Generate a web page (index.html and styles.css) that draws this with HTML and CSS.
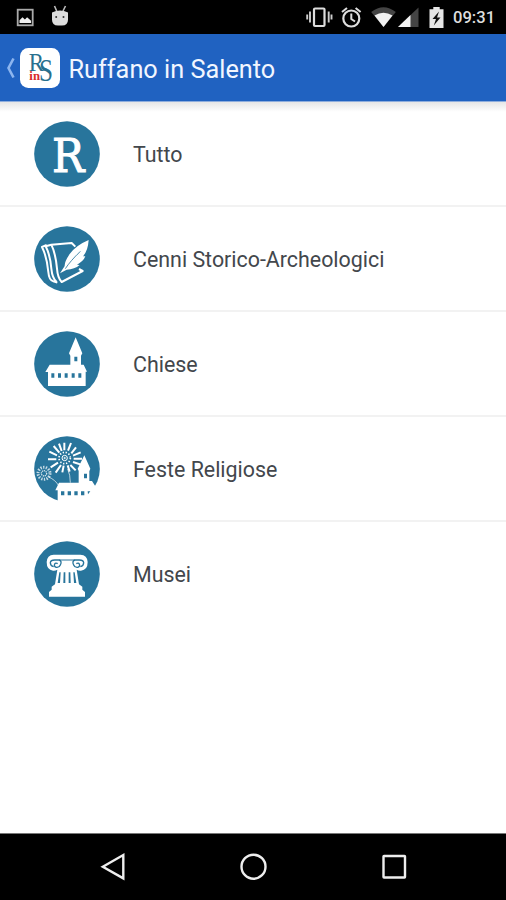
FILE: index.html
```html
<!DOCTYPE html>
<html lang="it">
<head>
<meta charset="utf-8">
<title>Ruffano in Salento</title>
<link rel="stylesheet" href="styles.css">
</head>
<body>
<div class="screen">
  <div class="status">
    <svg class="status-left" viewBox="0 0 80 34">
      <rect x="17.700" y="9.700" width="15" height="15.600" fill="none" stroke="#aaa" stroke-width="1.800"/>
      <path d="M19.500 23v-2.700l3-3 2.400 2.200 2.200-2.200 4 3.400V23z" fill="#eee"/>
      <path d="M54.500 6l2.200 5M65.500 6l-2.500 5" stroke="#bbb" stroke-width="1.600"/>
      <path d="M52 12.500q8-4 16 0v7q0 6-6 6h-4q-6 0-6-6z" fill="#ddd"/>
      <circle cx="56.200" cy="17" r="1" fill="#333"/><circle cx="63.500" cy="17" r="1" fill="#333"/>
    </svg>
    <svg class="status-right" viewBox="300 0 146 34">
      <rect x="314" y="8.500" width="10.500" height="17.500" rx="1" fill="none" stroke="#ddd" stroke-width="2.200"/>
      <path d="M310 11.500v11M307.200 14.500v5M328.700 11.500v11M331.500 14.500v5" stroke="#ccc" stroke-width="1.900"/>
      <circle cx="351.300" cy="18.500" r="8" fill="none" stroke="#ddd" stroke-width="2.200"/>
      <path d="M351.300 13.500v5.500l3.700 2.500M342 12l5-4M360.600 12l-5-4" fill="none" stroke="#ddd" stroke-width="2"/>
      <path d="M371.200 12q12.300-9.500 24.600 0L383.500 27z" fill="#444"/>
      <path d="M374.500 15.500q9-5.500 18 0L383.500 27z" fill="#f2f2f2"/>
      <path d="M418.500 7.500V27H398z" fill="#444"/>
      <path d="M410.500 15v12H398z" fill="#f2f2f2"/>
      <path d="M429.500 9.300h3.800V7h6.400v2.300h3.800V28h-14z" fill="#e6e6e6"/>
      <path d="M439 11.500l-6.500 7.500h3.500l-2.200 6.500 6.700-8H437z" fill="#111"/>
    </svg>
    <span class="clock">09:31</span>
  </div>
  <header class="appbar">
    <svg class="back" viewBox="0 0 9 22"><path d="M7.500 1.500L2.500 11L7.500 20.500" fill="none" stroke="#8cb5ef" stroke-width="2.600"/></svg>
    <svg class="logo" viewBox="0 0 120 120">
      <rect width="120" height="120" rx="25" fill="#fff"/>
      <text class="logo-letter" x="26" y="69" font-size="76" textLength="46" lengthAdjust="spacingAndGlyphs">R</text>
      <text class="logo-letter" x="57" y="98" font-size="92" textLength="42" lengthAdjust="spacingAndGlyphs">S</text>
      <text class="logo-in" x="28" y="95" font-size="36" textLength="32" lengthAdjust="spacingAndGlyphs">in</text>
    </svg>
    <h1 class="title">Ruffano in Salento</h1>
  </header>
  <ul class="list">
    <li class="row">
      <svg class="icon" viewBox="23 26 198 198">
        <circle class="disc" cx="122" cy="125" r="98.500"/>
        <text class="letter" x="77" y="179" font-size="141" textLength="97" lengthAdjust="spacingAndGlyphs">R</text>
      </svg>
      <span class="label">Tutto</span>
    </li>
    <li class="row">
      <svg class="icon" viewBox="23 22 198 198">
        <circle class="disc" cx="122" cy="121" r="98.500"/>
        <g fill="none" stroke="#fff" stroke-width="6" stroke-linejoin="round">
          <path d="M61 79L47 85Q62 115 66 160Q68 185 81 188L93 192"/>
          <path d="M75 78L58 83Q72 110 75 150Q78 180 91 190"/>
          <path d="M147 84L136 73L75 78Q88 105 92 150Q94 178 106 190L169 157L158 151"/>
        </g>
        <path d="M187 64Q149 80 130 106Q114 130 115 142L101 164L121 153Q145 152 160 139L152 138Q172 127 177 113L170 113Q185 96 187 64z" fill="#fff"/>
        <path d="M117 150Q132 127 162 98" fill="none" stroke="#28759c" stroke-width="2.500"/>
      </svg>
      <span class="label">Cenni Storico-Archeologici</span>
    </li>
    <li class="row">
      <svg class="icon" viewBox="23 20 198 198">
        <circle class="disc" cx="122" cy="119" r="98.500"/>
        <path d="M148 39L168 87L164 94V121H172L182 142H178V185H65V143H57L70 121H132V94L128 87z" fill="#fff"/>
        <path d="M144 97h9v14h-9zM75 147h9v13h-9zM95 147h9v13h-9zM115 147h9v13h-9zM136 147h9v13h-9zM156 147h9v13h-9z" fill="#28759c"/>
      </svg>
      <span class="label">Chiese</span>
    </li>
    <li class="row">
      <svg class="icon" viewBox="23 23 198 198">
        <circle class="disc" cx="122" cy="122" r="98.500"/>
        <g fill="none" stroke="#fff">
          <g stroke-width="6">
            <path d="M114 66V43M125 67L134 44M135 75L149 57M140 82L163 72M142 91H167M140 101L164 109M132 110L148 126M104 110L88 133M95 103L73 117M90 93H65M92 81L69 70M99 73L82 53M106 68L98 46M112 112L108 132M124 111L130 130"/>
          </g>
          <circle cx="115" cy="89" r="17" stroke-width="5" stroke-dasharray="4 5"/>
          <circle cx="115" cy="89" r="8" stroke-width="3"/>
          <circle cx="115" cy="89" r="2" stroke-width="3"/>
          <path d="M124 122Q132 139 132 163M64 145Q87 153 98 174" stroke-width="2"/>
          <circle cx="53" cy="135" r="18" stroke-width="9" stroke-dasharray="4 4" opacity=".75"/>
          <circle cx="53" cy="135" r="8" stroke-width="4" stroke-dasharray="4 2" opacity=".8"/>
        </g>
        <path d="M174 81L192 121L189 129V158H197L207 174H230V225H94V186H87L98 163H157V128L154 121z" fill="#fff"/>
        <path d="M173 136h9v14h-9zM104 189h10v12h-10zM124 189h10v12h-10zM144 189h10v12h-10zM164 189h10v12h-10zM184 189h8l-7 9z" fill="#28759c"/>
      </svg>
      <span class="label">Feste Religiose</span>
    </li>
    <li class="row">
      <svg class="icon" viewBox="23 19 198 198">
        <circle class="disc" cx="122" cy="118" r="98.500"/>
        <path d="M82 60H162Q183 61 184 82Q184 106 164 108Q157 109 151 105L158 149L168 156V165L176 172V186H68V172L76 165V156L86 149L93 105Q87 109 80 108Q61 106 61 82Q62 61 82 60z" fill="#fff"/>
        <g fill="none" stroke="#28759c" stroke-width="4">
          <path d="M82 96Q72 93 72 84Q73 76 85 76H98Q108 79 102 91Q99 99 90 98Q82 96 85 88Q88 83 94 87"/>
          <path d="M162 96Q172 93 172 84Q171 76 159 76H146Q136 79 142 91Q145 99 154 98Q162 96 159 88Q156 83 150 87"/>
          <path d="M98 76H146" stroke-width="3"/>
        </g>
        <path d="M99 113h4l-2 32h-7zM112 113h5v32h-6zM127 113h5l1 32h-6zM141 113h4l5 32h-7z" fill="#28759c"/>
      </svg>
      <span class="label">Musei</span>
    </li>
  </ul>
  <nav class="navbar">
    <svg viewBox="78 834 350 66" fill="none" stroke="#eee" stroke-width="2.400">
      <path d="M102.800 866.700L123.300 855V878.400z"/>
      <circle cx="253.500" cy="866.700" r="12"/>
      <rect x="383.500" y="856" width="21.500" height="21.500" rx=".5"/>
    </svg>
  </nav>
</div>
</body>
</html>
```
FILE: styles.css
```css
* { box-sizing: border-box; }

body {
  margin: 0;
  background: #fff;
  font-family: Roboto, "Liberation Sans", sans-serif;
}

.screen {
  width: 506px;
  height: 900px;
  display: flex;
  flex-direction: column;
}

.status {
  height: 34px;
  flex: none;
  display: flex;
  background: #000;
}

.status-left { width: 80px; height: 34px; }
.status-right { width: 146px; height: 34px; margin-left: 220px; }

.clock {
  margin-left: 7px;
  font-size: 16.600px;
  font-weight: 500;
  line-height: 36px;
  color: #ddd;
}

.appbar {
  height: 68px;
  flex: none;
  display: flex;
  align-items: center;
  padding-left: 6px;
  background: #2062c1;
  border-bottom: 1px solid #8faedd;
}

.back { width: 9px; height: 22px; }
.logo { width: 40px; height: 40px; margin-left: 5px; }
.logo-letter { font-family: "Liberation Serif", serif; fill: #28708e; }
.logo-in { font-family: "Liberation Serif", serif; font-weight: bold; fill: #d92b2b; }

.title {
  margin: 0 0 0 8.500px;
  padding-top: 4px;
  font-size: 25.300px;
  font-weight: 400;
  line-height: 30px;
  color: #f2f6ff;
  white-space: nowrap;
}

.list {
  flex: 1;
  margin: 0;
  padding: 0;
  list-style: none;
  background: linear-gradient(#e6e6e6, #fff 10px);
}

.row {
  height: 105px;
  display: flex;
  align-items: center;
  padding-left: 33.500px;
  border-bottom: 2px solid #f2f2f2;
}

.row:last-child { border-bottom-color: transparent; }

.icon { width: 66px; height: 66px; flex: none; }
.disc { fill: #28759c; }
.letter {
  font-family: "DejaVu Serif", serif;
  fill: #fff;
  stroke: #fff;
  stroke-width: 3px;
}

.label {
  margin-left: 33.500px;
  padding-top: 2px;
  font-size: 21.400px;
  line-height: 28px;
  color: #43474c;
  white-space: nowrap;
}

.navbar {
  height: 67px;
  flex: none;
  display: flex;
  justify-content: center;
  background: #000;
  border-top: 1px solid #777;
}

.navbar svg { width: 350px; height: 66px; }
```
